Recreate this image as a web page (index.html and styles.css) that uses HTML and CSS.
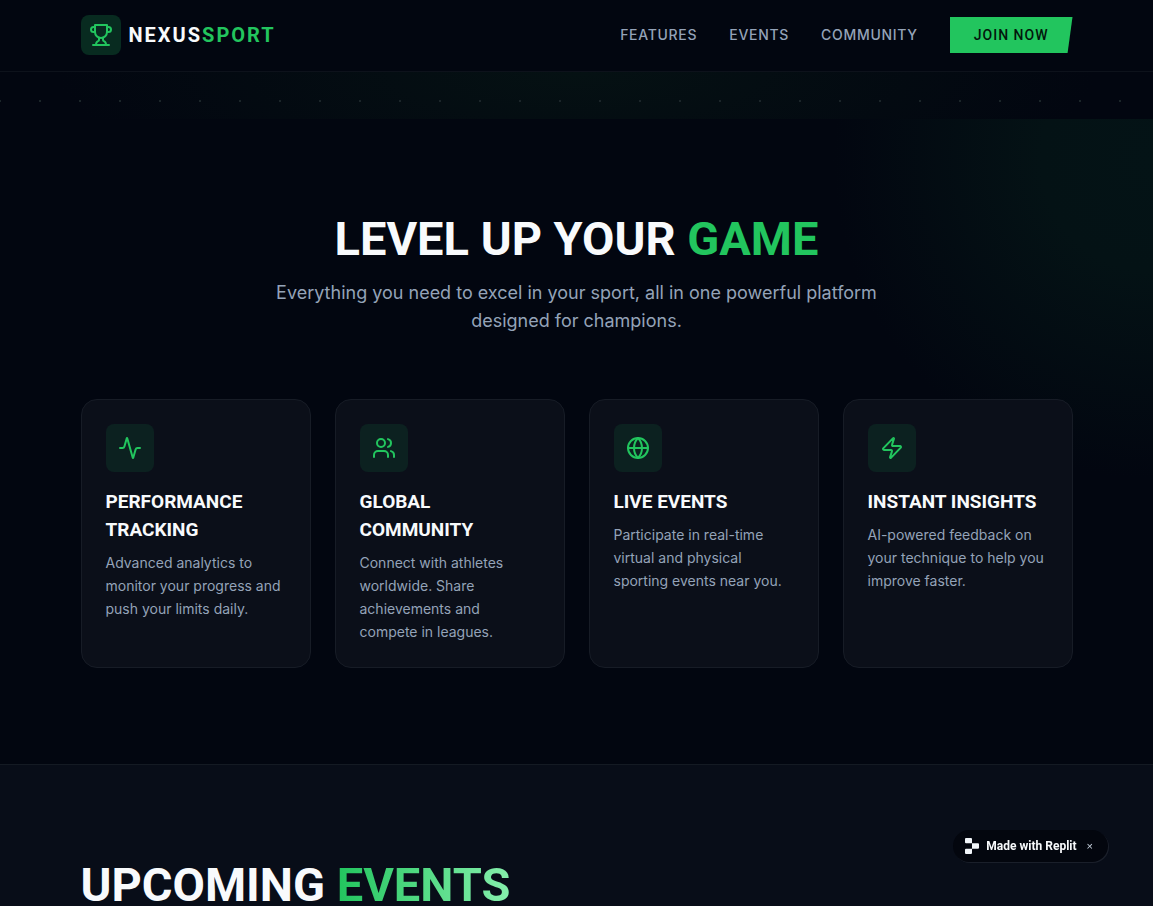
FILE: index.html
```html
<!DOCTYPE html>
<html lang="en">
<head>
    <meta charset="UTF-8">
    <meta name="viewport" content="width=device-width, initial-scale=1.0">
    <title>NexusSport</title>
    <link rel="stylesheet" href="styles.css">
</head>
<body>
    <header class="site-header">
        <div class="container header-inner">
            <a class="logo" href="#">
                <span class="logo-mark">
                    <svg class="icon" viewBox="0 0 24 24" aria-hidden="true">
                        <path d="M6 9H4.5a2.5 2.5 0 0 1 0-5H6"/>
                        <path d="M18 9h1.500a2.500 2.500 0 0 0 0-5H18"/>
                        <path d="M4 22h16"/>
                        <path d="M10 14.660V17c0 .550-.470.980-.970 1.210C7.850 18.750 7 20.240 7 22"/>
                        <path d="M14 14.660V17c0 .550.470.980.970 1.210C16.150 18.750 17 20.240 17 22"/>
                        <path d="M18 2H6v7a6 6 0 0 0 12 0V2Z"/>
                    </svg>
                </span>
                <span class="logo-text">NEXUS<span class="green">SPORT</span></span>
            </a>
            <nav class="nav">
                <a href="#features">FEATURES</a>
                <a href="#events">EVENTS</a>
                <a href="#community">COMMUNITY</a>
                <button class="join" type="button">JOIN NOW</button>
            </nav>
        </div>
    </header>

    <main>
        <div class="hero-edge"></div>

        <section class="features" id="features">
            <div class="container">
                <div class="intro">
                    <h2>LEVEL UP YOUR <span class="green">GAME</span></h2>
                    <p>Everything you need to excel in your sport, all in one powerful platform designed for champions.</p>
                </div>
                <div class="cards">
                    <article class="card">
                        <div class="card-icon">
                            <svg class="icon" viewBox="0 0 24 24" aria-hidden="true">
                                <path d="M22 12h-2.480a2 2 0 0 0-1.930 1.460l-2.350 8.360a.25.25 0 0 1-.480 0L9.240 2.180a.25.25 0 0 0-.480 0l-2.350 8.360A2 2 0 0 1 4.490 12H2"/>
                            </svg>
                        </div>
                        <h3>PERFORMANCE TRACKING</h3>
                        <p>Advanced analytics to monitor your progress and push your limits daily.</p>
                    </article>
                    <article class="card">
                        <div class="card-icon">
                            <svg class="icon" viewBox="0 0 24 24" aria-hidden="true">
                                <path d="M16 21v-2a4 4 0 0 0-4-4H6a4 4 0 0 0-4 4v2"/>
                                <circle cx="9" cy="7" r="4"/>
                                <path d="M22 21v-2a4 4 0 0 0-3-3.870"/>
                                <path d="M16 3.130a4 4 0 0 1 0 7.750"/>
                            </svg>
                        </div>
                        <h3>GLOBAL COMMUNITY</h3>
                        <p>Connect with athletes worldwide. Share achievements and compete in leagues.</p>
                    </article>
                    <article class="card">
                        <div class="card-icon">
                            <svg class="icon" viewBox="0 0 24 24" aria-hidden="true">
                                <circle cx="12" cy="12" r="10"/>
                                <path d="M12 2a14.500 14.500 0 0 0 0 20 14.500 14.500 0 0 0 0-20"/>
                                <path d="M2 12h20"/>
                            </svg>
                        </div>
                        <h3>LIVE EVENTS</h3>
                        <p>Participate in real-time virtual and physical sporting events near you.</p>
                    </article>
                    <article class="card">
                        <div class="card-icon">
                            <svg class="icon" viewBox="0 0 24 24" aria-hidden="true">
                                <path d="M4 14a1 1 0 0 1-.780-1.630l9.900-10.200a.5.5 0 0 1 .860.460l-1.920 6.020A1 1 0 0 0 13 10h7a1 1 0 0 1 .780 1.630l-9.900 10.200a.5.5 0 0 1-.860-.460l1.920-6.020A1 1 0 0 0 11 14z"/>
                            </svg>
                        </div>
                        <h3>INSTANT INSIGHTS</h3>
                        <p>AI-powered feedback on your technique to help you improve faster.</p>
                    </article>
                </div>
            </div>
        </section>

        <section class="events" id="events">
            <div class="container">
                <h2>UPCOMING <span class="fade">EVENTS</span></h2>
            </div>
        </section>
    </main>

    <div class="badge">
        <svg class="badge-logo" viewBox="0 0 14 16" aria-hidden="true">
            <path d="M1 0h5a1 1 0 0 1 1 1v4.300H1a1 1 0 0 1-1-1V1a1 1 0 0 1 1-1zM7 5.300h6a1 1 0 0 1 1 1v3.400a1 1 0 0 1-1 1H7zM1 10.700h6V15a1 1 0 0 1-1 1H1a1 1 0 0 1-1-1v-3.300a1 1 0 0 1 1-1z"/>
        </svg>
        <a href="#">Made with Replit</a>
        <button type="button" aria-label="Close">×</button>
    </div>
</body>
</html>
```

FILE: styles.css
```css
* {
    box-sizing: border-box;
}
body {
    margin: 0;
    background-color: #020610;
    color: #f8fafc;
    font-family: Inter, sans-serif;
}
h2, h3, p {
    margin: 0;
}
a {
    color: inherit;
    text-decoration: none;
}
button {
    border: none;
    cursor: pointer;
}
.container {
    max-width: 1024px;
    margin: 0 auto;
    padding: 0 16px;
}
.green {
    color: #22c55e;
}
.icon {
    width: 24px;
    height: 24px;
    fill: none;
    stroke: #22c55e;
    stroke-width: 2;
    stroke-linecap: round;
    stroke-linejoin: round;
}

/* Header */
.site-header {
    position: sticky;
    top: 0;
    z-index: 10;
    padding: 15px 0 16px;
    background-color: #020610;
    border-bottom: 1px solid #0d121b;
}
.header-inner {
    display: flex;
    align-items: center;
    justify-content: space-between;
}
.logo {
    display: flex;
    align-items: center;
    gap: 8px;
}
.logo-mark {
    display: flex;
    align-items: center;
    justify-content: center;
    width: 40px;
    height: 40px;
    border-radius: 8px;
    background-color: #082b20;
}
.logo-text {
    font-family: Roboto, sans-serif;
    font-size: 20px;
    font-weight: 700;
    line-height: 28px;
    letter-spacing: 0.1em;
}
.nav {
    display: flex;
    align-items: center;
    gap: 32px;
    color: #94a3b8;
    font-size: 14px;
    font-weight: 500;
    line-height: 20px;
    letter-spacing: 0.05em;
}
.join {
    padding: 8px 24px;
    background-color: #22c55e;
    clip-path: polygon(0 0, 100% 0, 96% 100%, 0 100%);
    color: #03160c;
    font-family: Roboto, sans-serif;
    font-size: 14px;
    font-weight: 500;
    line-height: 20px;
    letter-spacing: 1px;
}

/* Bottom strip of the hero with its dot grid */
.hero-edge {
    height: 47px;
    background-image:
        radial-gradient(circle, #1b2529 1px, transparent 1px),
        radial-gradient(ellipse 45% 300% at 50% 0, #051113, transparent);
    background-size: 40px 40px, auto;
    background-position: 20px 9px, 0 0;
}

/* Features */
.features {
    padding: 96px 0;
    background-image: radial-gradient(circle 320px at 100% 40px, #041316 0%, #041215 35%, transparent 100%);
}
h2 {
    font-family: Roboto, sans-serif;
    font-size: 47px;
    font-weight: 700;
    line-height: 48px;
}
.intro {
    display: flex;
    flex-direction: column;
    align-items: center;
    gap: 16px;
    margin-bottom: 64px;
    text-align: center;
}
.intro p {
    max-width: 640px;
    color: #94a3b8;
    font-size: 18px;
    line-height: 28px;
}
.cards {
    display: grid;
    grid-template-columns: repeat(4, 1fr);
    gap: 24px;
}
.card {
    padding: 24px;
    background-color: #0b0f19;
    border: 1px solid #171c26;
    border-radius: 16px;
}
.card-icon {
    display: flex;
    align-items: center;
    justify-content: center;
    width: 48px;
    height: 48px;
    margin-bottom: 16px;
    border-radius: 8px;
    background-color: #0c2120;
}
.card h3 {
    margin-bottom: 7px;
    font-family: Roboto, sans-serif;
    font-size: 19px;
    font-weight: 700;
    line-height: 28px;
}
.card p {
    color: #94a3b8;
    font-size: 14px;
    line-height: 23px;
}

/* Events */
.events {
    padding: 96px 0;
    background-color: #080d18;
    border-top: 1px solid #141a23;
}
.fade {
    background-image: linear-gradient(to right, #22c55e, #86efac);
    background-clip: text;
    -webkit-background-clip: text;
    color: transparent;
}

/* Badge */
.badge {
    position: fixed;
    right: 45px;
    bottom: 44px;
    z-index: 20;
    display: flex;
    align-items: center;
    gap: 7px;
    padding: 6px 12px;
    background-color: #03060e;
    border-radius: 16px;
    box-shadow: 1px 1px 0 #1a1f2a;
    font-family: Roboto, sans-serif;
    font-size: 12px;
    font-weight: 700;
    line-height: 20px;
}
.badge-logo {
    width: 14px;
    height: 16px;
    fill: #f1f5f9;
}
.badge button {
    padding: 0 3px;
    background: none;
    color: #cbd5e1;
    font-size: 11px;
}
```
